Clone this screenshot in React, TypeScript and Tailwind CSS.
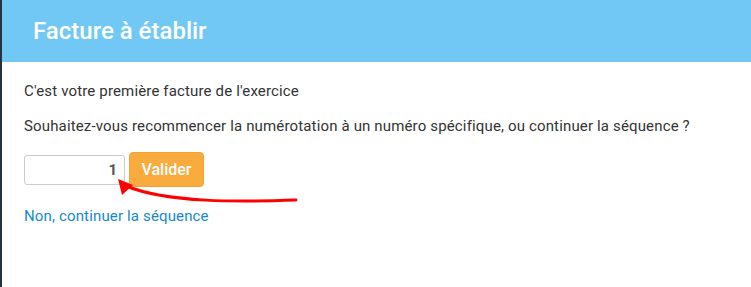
export default function App() {
  return (
    <div className="relative flex h-[287px] w-[751px] overflow-hidden bg-white font-['Roboto',sans-serif]">
      {/* bande sombre à gauche */}
      <div className="w-[2px] shrink-0 bg-[#25323f]" />

      <div className="flex flex-1 flex-col">
        <div className="flex h-[62px] items-center bg-[#72c8f4] pl-[31px]">
          <h1 className="text-[24px] font-medium leading-none text-white">Facture à établir</h1>
        </div>

        <div className="flex flex-col pl-[22px] pt-[19px] tracking-[0.15px]">
          <p className="text-[15px] leading-[20px] text-[#333]">
            C'est votre première facture de l'exercice
          </p>
          <p className="mt-[15px] text-[15px] leading-[20px] text-[#333]">
            Souhaitez-vous recommencer la numérotation à un numéro spécifique, ou continuer la séquence ?
          </p>

          <div className="mt-[16px] flex items-center gap-[4px] tracking-normal">
            <input
              type="text"
              defaultValue="1"
              className="h-[30px] w-[101px] rounded-[3px] border border-[#cccccc] bg-white px-[7px] text-right text-[15px] font-bold text-[#555] outline-none"
            />
            <button
              type="button"
              className="h-[35px] w-[75px] rounded-[4px] border border-[#f3a232] bg-[#f9ab3e] text-[16px] font-medium text-white"
            >
              Valider
            </button>
          </div>

          <a href="#" className="mt-[19px] text-[15px] leading-[20px] text-[#1389cf]">
            Non, continuer la séquence
          </a>
        </div>
      </div>

      {/* flèche d'annotation */}
      <svg
        className="pointer-events-none absolute left-0 top-0"
        width="751"
        height="287"
        viewBox="0 0 751 287"
      >
        <path
          d="M296 200 C 240 202, 168 203, 126 186"
          fill="none"
          stroke="#ff0000"
          strokeWidth="3"
          strokeLinecap="round"
        />
        <polygon points="118,179 122,195 133,185" fill="#ff0000" />
      </svg>
    </div>
  );
}
